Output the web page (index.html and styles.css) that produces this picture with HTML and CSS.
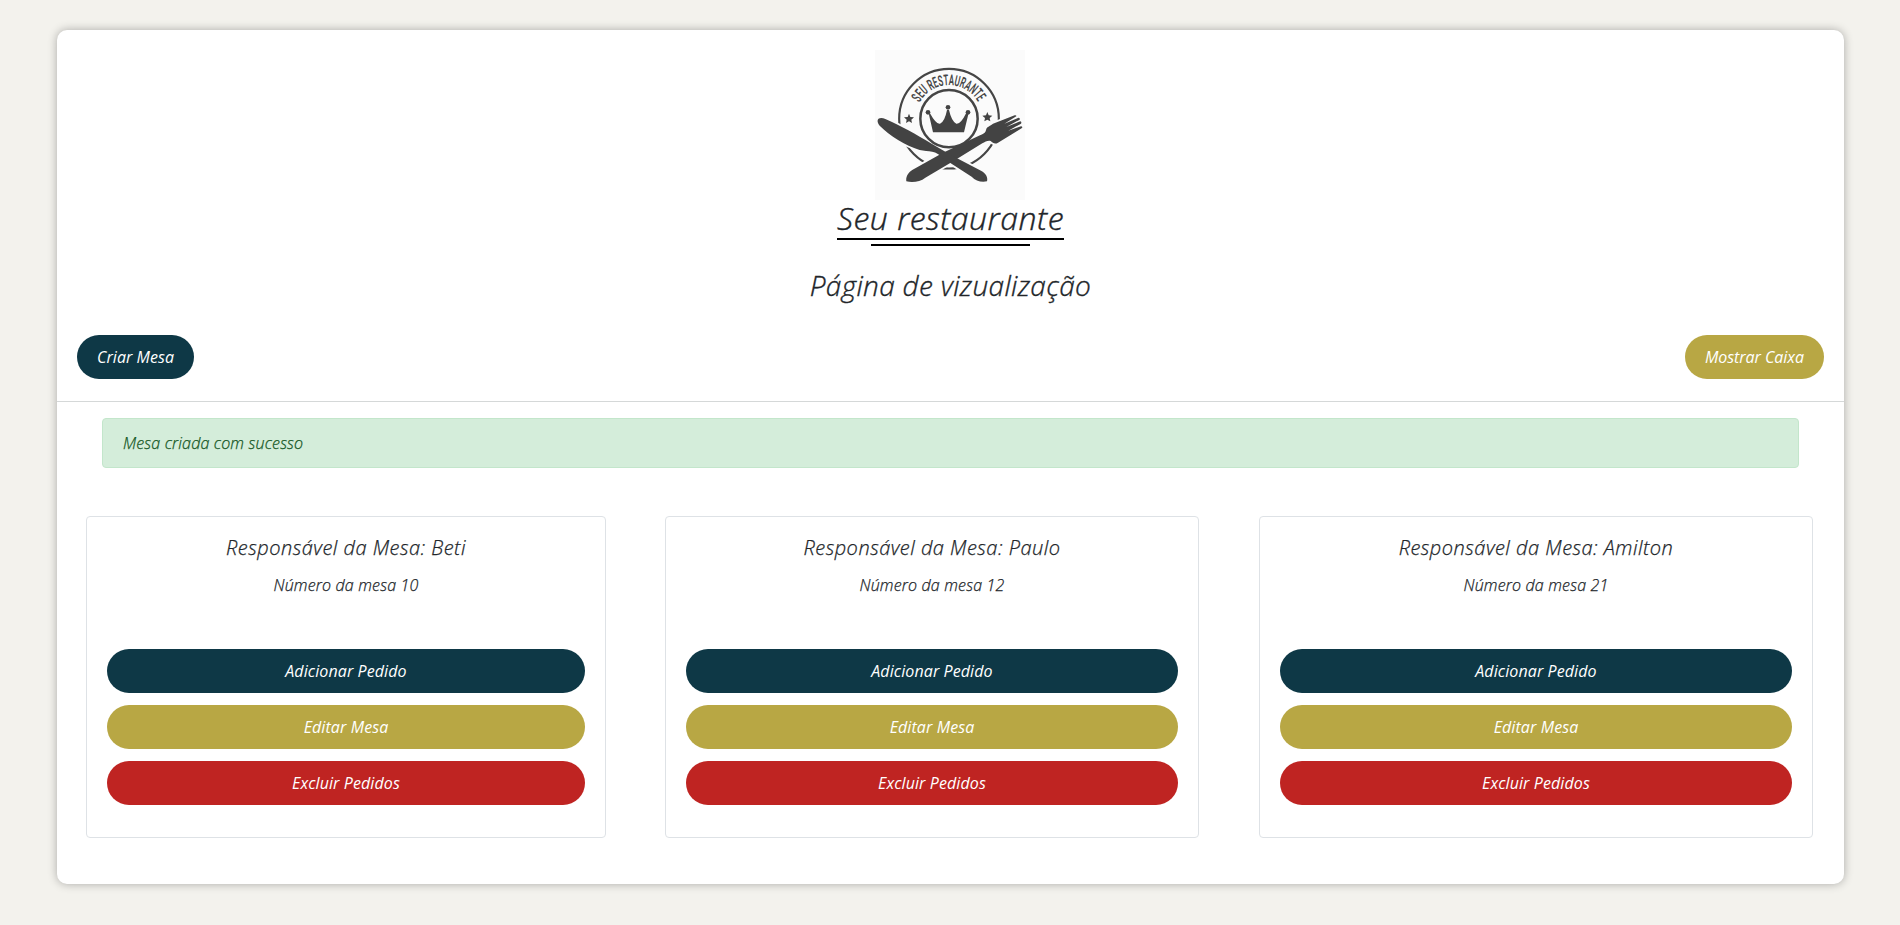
FILE: index.html
```
<!DOCTYPE html>
<html lang="pt-BR">
<head>
<meta charset="utf-8">
<title>Seu restaurante</title>
<link rel="stylesheet" href="styles.css">
</head>
<body>
<main class="panel">
  <header class="header">
    <svg class="logo" viewBox="0 0 450 450" role="img" aria-label="Seu restaurante">
      <defs>
        <path id="arc" d="M134 158 A100 100 0 0 1 310 158"/>
        <path id="knife" d="M8 211 C10 202 22 203 31 207 C75 226 125 254 170 281 L229 316 L318 362 C333 370 339 382 336 394 C318 397 302 393 290 380 L204 325 C185 301 160 305 134 300 C90 286 45 258 14 227 C9 221 7 216 8 211Z"/>
        <path id="fork" d="M204 308 L315 256 C332 248 331 247 334 237 C336 230 346 228 354 221 L419 196 Q425 195 424 199 L388 221 L431 203 Q436 204 434 209 L394 231 L436 214 Q441 216 438 221 L400 242 L438 229 Q444 230 441 234 L369 278 C360 284 354 279 347 273 C340 270 330 275 322 280 L237 332 L151 383 C136 395 114 398 94 394 C92 380 99 367 113 359Z"/>
        <path id="star" d="M0 -15 L4 -5 L15 -4 L7 3 L9 13 L0 8 L-9 13 L-7 3 L-15 -4 L-4 -5Z"/>
      </defs>
      <rect width="450" height="450" fill="#fbfbfb"/>
      <circle cx="222" cy="206" r="149.500" fill="none" stroke="#454545" stroke-width="6.500"/>
      <g fill="#fbfbfb" stroke="#fbfbfb" stroke-width="11" stroke-linejoin="round">
        <use href="#knife"/><use href="#fork"/>
      </g>
      <circle cx="222" cy="206" r="86" fill="none" stroke="#454545" stroke-width="7.500"/>
      <g fill="#434343"><use href="#fork"/><use href="#knife"/>
        <use href="#star" x="102" y="206"/><use href="#star" x="337" y="201"/>
        <path d="M174 247 L162 194 L164 188 Q184 224 195 221 Q209 216 216 180 L222 180 Q230 215 244 221 Q257 223 274 188 L280 193 L267 247Z"/>
        <circle cx="159" cy="187" r="7"/><circle cx="219" cy="172" r="7"/><circle cx="279" cy="187" r="7"/>
      </g>
      <text class="logo-text"><textPath href="#arc" textLength="213" lengthAdjust="spacingAndGlyphs">SEU RESTAURANTE</textPath></text>
    </svg>
    <h1 class="title">Seu restaurante</h1>
    <h2 class="subtitle">Página de vizualização</h2>
  </header>
  <nav class="toolbar">
    <a class="btn navy">Criar Mesa</a>
    <a class="btn gold">Mostrar Caixa</a>
  </nav>
  <div class="alert">Mesa criada com sucesso</div>
  <section class="tables">
    <article class="card">
      <h3 class="name">Responsável da Mesa: Beti</h3>
      <p class="number">Número da mesa 10</p>
      <div class="actions"><a class="btn navy">Adicionar Pedido</a><a class="btn gold">Editar Mesa</a><a class="btn red">Excluir Pedidos</a></div>
    </article>
    <article class="card">
      <h3 class="name">Responsável da Mesa: Paulo</h3>
      <p class="number">Número da mesa 12</p>
      <div class="actions"><a class="btn navy">Adicionar Pedido</a><a class="btn gold">Editar Mesa</a><a class="btn red">Excluir Pedidos</a></div>
    </article>
    <article class="card">
      <h3 class="name">Responsável da Mesa: Amilton</h3>
      <p class="number">Número da mesa 21</p>
      <div class="actions"><a class="btn navy">Adicionar Pedido</a><a class="btn gold">Editar Mesa</a><a class="btn red">Excluir Pedidos</a></div>
    </article>
  </section>
</main>
</body>
</html>
```
FILE: styles.css
```
* { box-sizing: border-box; margin: 0; }
body {
  background: #f3f2ed;
  color: #212529;
  font: italic 300 16px/24px "Open Sans", "Noto Sans", sans-serif;
  -webkit-text-stroke: .25px currentColor;
  padding: 30px 56px 41px 57px;
}
.panel {
  height: 854px;
  background: #fff;
  border-radius: 10px;
  box-shadow: 0 0 10px rgba(0, 0, 0, .3);
}
.header {
  display: flex;
  flex-direction: column;
  align-items: center;
  padding-top: 20px;
}
.logo { width: 150px; height: 150px; display: block; margin-right: 1px; -webkit-text-stroke: 0; }
.logo-text { font: 600 45px Roboto, sans-serif; fill: #454545; }
.title {
  position: relative;
  height: 40px;
  border-bottom: 2px solid #000;
  font-size: 32px;
  font-weight: 300;
  line-height: 35px;
  letter-spacing: .48px;
  -webkit-text-stroke-width: .4px;
}
.title::after {
  content: "";
  position: absolute;
  top: 44px;
  left: 15%;
  width: 70%;
  height: 2px;
  background: #000;
}
.subtitle {
  margin-top: 28px;
  font-size: 28px;
  font-weight: 300;
  line-height: 34px;
  letter-spacing: .33px;
  -webkit-text-stroke-width: .35px;
}
.toolbar {
  display: flex;
  justify-content: space-between;
  padding: 33px 20px 22px;
  border-bottom: 1px solid #d5d8d8;
}
.btn {
  display: block;
  height: 44px;
  padding: 0 20px;
  border-radius: 22px;
  color: #fff;
  font-weight: 500;
  line-height: 44px;
  letter-spacing: .1px;
  text-align: center;
  -webkit-text-stroke: 0;
}
.toolbar .btn { letter-spacing: .04px; }
.toolbar .gold { letter-spacing: -.04px; }
.navy { background: #0e3846; }
.gold { background: #b8a744; }
.red { background: #bf2422; }
.alert {
  height: 50px;
  margin: 16px 45px 0;
  padding: 12px 20px;
  border: 1px solid #c3e6cb;
  border-radius: 4px;
  background: #d4edda;
  color: #155724;
  letter-spacing: .16px;
}
.tables {
  display: grid;
  grid-template-columns: 520px 534px 554px;
  column-gap: 59px;
  padding: 48px 31px 0 29px;
}
.card {
  height: 322px;
  padding: 19px 20px;
  border: 1px solid #dee2e6;
  border-radius: 4px;
  text-align: center;
}
.card:last-child { margin-left: 1px; margin-right: -1px; }
.name { font-size: 20px; font-weight: 300; line-height: 24px; letter-spacing: .49px; }
.number { margin-top: 13px; letter-spacing: .17px; }
.actions { display: grid; gap: 12px; margin-top: 52px; }
```
